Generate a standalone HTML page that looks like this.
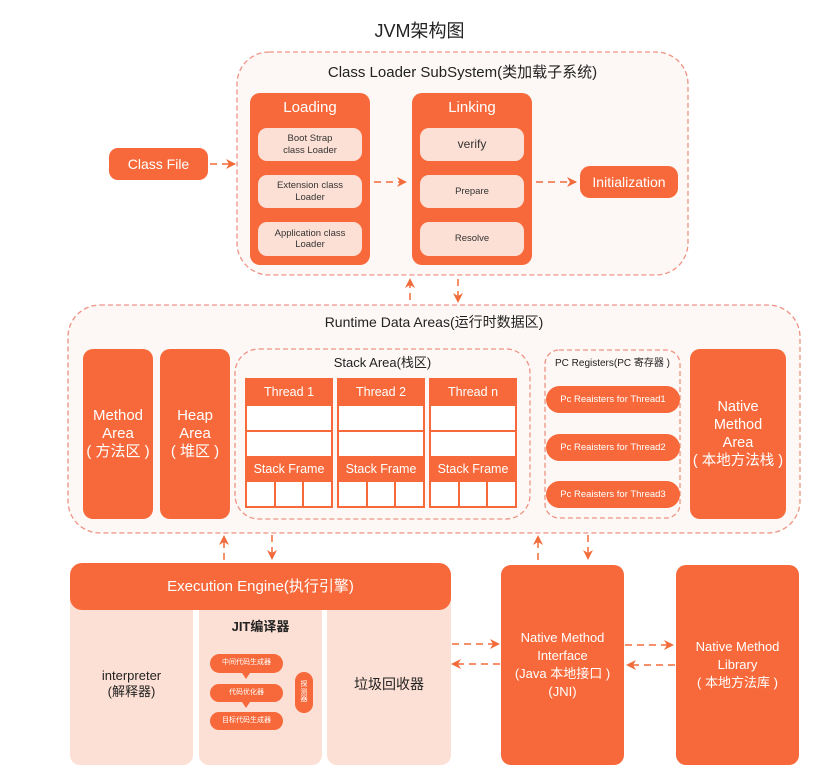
<!DOCTYPE html>
<html><head><meta charset="utf-8"><style>
*{margin:0;padding:0;box-sizing:border-box}
body{width:839px;height:778px;background:#fff;position:relative;overflow:hidden;font-family:"Liberation Sans","Noto Sans CJK SC",sans-serif;}
.a{position:absolute;display:flex;align-items:center;justify-content:center;text-align:center;line-height:1.2}
.o{background:#f7693a;color:#fff}
.p{background:#fde0d5;color:#333}
.t{color:#222}
svg{position:absolute;left:0;top:0}
</style></head><body>
<svg width="839" height="778">
<defs><marker id="ar" viewBox="0 0 10 10" refX="9" refY="5" markerWidth="10" markerHeight="10" markerUnits="userSpaceOnUse" orient="auto"><path d="M0,0 L10,5 L0,10 L3,5z" fill="#f26b3a"/></marker></defs>
<rect x="237" y="52" width="451" height="223" rx="32" fill="#fdf8f6" stroke="#ee9383" stroke-width="1.3" stroke-dasharray="5,3"/>
<rect x="68" y="305" width="732" height="228" rx="32" fill="#fdf8f6" stroke="#ee9383" stroke-width="1.3" stroke-dasharray="5,3"/>
<rect x="235" y="349" width="295" height="170" rx="24" fill="none" stroke="#ee9383" stroke-width="1.3" stroke-dasharray="5,3"/>
<rect x="545" y="350" width="135" height="168" rx="14" fill="none" stroke="#ee9383" stroke-width="1.3" stroke-dasharray="5,3"/>
<g stroke="#f26b3a" stroke-width="1.5" stroke-dasharray="7,5" fill="none" marker-end="url(#ar)">
<path d="M210 164 L235 164"/>
<path d="M374 182 L406 182"/>
<path d="M536 182 L576 182"/>
<path d="M410 300 L410 279"/>
<path d="M458 279 L458 302"/>
<path d="M224 560 L224 536"/>
<path d="M272 535 L272 559"/>
<path d="M538 560 L538 536"/>
<path d="M588 535 L588 559"/>
<path d="M452 644 L499 644"/>
<path d="M500 664 L452 664"/>
<path d="M625 645 L673 645"/>
<path d="M675 665 L627 665"/>
</g>
<rect x="207" y="648" width="85" height="90" rx="14" fill="none" stroke="#e98a7e" stroke-width="1.3" stroke-dasharray="4,3"/>
</svg>
<div class="a t" style="left:0;width:839px;top:20px;height:24px;font-size:18px">JVM架构图</div>
<div class="a t" style="left:237px;width:451px;top:63px;height:20px;font-size:15px">Class Loader SubSystem(类加载子系统)</div>
<div class="a o" style="left:109px;top:148px;width:99px;height:32px;border-radius:9px;font-size:14px">Class File</div>

<div class="o" style="position:absolute;left:250px;top:93px;width:120px;height:172px;border-radius:10px"></div>
<div class="a" style="left:250px;top:98px;width:120px;height:20px;color:#fff;font-size:15px">Loading</div>
<div class="a p" style="left:258px;top:128px;width:104px;height:33px;border-radius:9px;font-size:9.5px">Boot Strap<br>class Loader</div>
<div class="a p" style="left:258px;top:175px;width:104px;height:33px;border-radius:9px;font-size:9.5px">Extension class<br>Loader</div>
<div class="a p" style="left:258px;top:222px;width:104px;height:34px;border-radius:9px;font-size:9.5px">Application class<br>Loader</div>

<div class="o" style="position:absolute;left:412px;top:93px;width:120px;height:172px;border-radius:10px"></div>
<div class="a" style="left:412px;top:98px;width:120px;height:20px;color:#fff;font-size:15px">Linking</div>
<div class="a p" style="left:420px;top:128px;width:104px;height:33px;border-radius:9px;font-size:12px">verify</div>
<div class="a p" style="left:420px;top:175px;width:104px;height:33px;border-radius:9px;font-size:9.5px">Prepare</div>
<div class="a p" style="left:420px;top:222px;width:104px;height:34px;border-radius:9px;font-size:9.5px">Resolve</div>
<div class="a o" style="left:580px;top:166px;width:98px;height:32px;border-radius:10px;font-size:14px">Initialization</div>

<div class="a t" style="left:68px;width:732px;top:312px;height:20px;font-size:14px">Runtime Data Areas(运行时数据区)</div>
<div class="a o" style="left:83px;top:349px;width:70px;height:170px;border-radius:10px;font-size:15px;line-height:1.2">Method<br>Area<br>( 方法区 )</div>
<div class="a o" style="left:160px;top:349px;width:70px;height:170px;border-radius:10px;font-size:15px;line-height:1.2">Heap<br>Area<br>( 堆区 )</div>
<div class="a t" style="left:235px;width:295px;top:354px;height:18px;font-size:13px">Stack Area(栈区)</div>

<div style="position:absolute;left:245px;top:378px;width:88px;height:130px;background:#f7693a;padding:0 2px 2px">
<div class="a" style="position:static;height:28px;color:#fff;font-size:12.5px">Thread 1</div>
<div style="height:24px;background:#fff"></div><div style="height:2px"></div>
<div style="height:24px;background:#fff"></div>
<div class="a" style="position:static;height:26px;color:#fff;font-size:12.5px">Stack Frame</div>
<div style="display:flex;gap:2px;height:24px"><div style="flex:1;background:#fff"></div><div style="flex:1;background:#fff"></div><div style="flex:1;background:#fff"></div></div>
</div>
<div style="position:absolute;left:337px;top:378px;width:88px;height:130px;background:#f7693a;padding:0 2px 2px">
<div class="a" style="position:static;height:28px;color:#fff;font-size:12.5px">Thread 2</div>
<div style="height:24px;background:#fff"></div><div style="height:2px"></div>
<div style="height:24px;background:#fff"></div>
<div class="a" style="position:static;height:26px;color:#fff;font-size:12.5px">Stack Frame</div>
<div style="display:flex;gap:2px;height:24px"><div style="flex:1;background:#fff"></div><div style="flex:1;background:#fff"></div><div style="flex:1;background:#fff"></div></div>
</div>
<div style="position:absolute;left:429px;top:378px;width:88px;height:130px;background:#f7693a;padding:0 2px 2px">
<div class="a" style="position:static;height:28px;color:#fff;font-size:12.5px">Thread n</div>
<div style="height:24px;background:#fff"></div><div style="height:2px"></div>
<div style="height:24px;background:#fff"></div>
<div class="a" style="position:static;height:26px;color:#fff;font-size:12.5px">Stack Frame</div>
<div style="display:flex;gap:2px;height:24px"><div style="flex:1;background:#fff"></div><div style="flex:1;background:#fff"></div><div style="flex:1;background:#fff"></div></div>
</div>

<div class="a t" style="left:545px;width:135px;top:357px;height:14px;font-size:10px">PC Registers(PC 寄存器 )</div>
<div class="a o" style="left:546px;top:386px;width:134px;height:27px;border-radius:14px;font-size:9.5px">Pc Reaisters for Thread1</div>
<div class="a o" style="left:546px;top:434px;width:134px;height:27px;border-radius:14px;font-size:9.5px">Pc Reaisters for Thread2</div>
<div class="a o" style="left:546px;top:481px;width:134px;height:27px;border-radius:14px;font-size:9.5px">Pc Reaisters for Thread3</div>
<div class="a o" style="left:690px;top:349px;width:96px;height:170px;border-radius:10px;font-size:14.5px;line-height:1.25">Native<br>Method<br>Area<br>( 本地方法栈 )</div>

<div class="p" style="position:absolute;left:70px;top:590px;width:123px;height:175px;border-radius:10px"></div>
<div class="p" style="position:absolute;left:199px;top:590px;width:123px;height:175px;border-radius:10px"></div>
<div class="p" style="position:absolute;left:327px;top:590px;width:124px;height:175px;border-radius:10px"></div>
<div class="a o" style="left:70px;top:563px;width:381px;height:47px;border-radius:12px;font-size:15px">Execution Engine(执行引擎)</div>
<div class="a t" style="left:70px;top:666px;width:123px;height:36px;font-size:13px">interpreter<br>(解释器)</div>
<div class="a t" style="left:199px;top:618px;width:123px;height:18px;font-size:13px;font-weight:bold">JIT编译器</div>
<div class="a o" style="left:210px;top:654px;width:73px;height:19px;border-radius:10px;font-size:7px">中间代码生成器</div>
<div class="a o" style="left:210px;top:684px;width:73px;height:18px;border-radius:10px;font-size:7px">代码优化器</div>
<div class="a o" style="left:210px;top:712px;width:73px;height:18px;border-radius:10px;font-size:7px">目标代码生成器</div>
<div style="position:absolute;left:242px;top:673px;border:4px solid transparent;border-top:6px solid #f7693a"></div>
<div style="position:absolute;left:242px;top:702px;border:4px solid transparent;border-top:6px solid #f7693a"></div>
<div class="a o" style="left:295px;top:672px;width:18px;height:41px;border-radius:9px;font-size:7px;line-height:1.1">探<br>测<br>器</div>
<div class="a t" style="left:327px;top:674px;width:124px;height:20px;font-size:14px">垃圾回收器</div>

<div class="a o" style="left:501px;top:565px;width:123px;height:200px;border-radius:10px;font-size:13px;line-height:1.4">Native Method<br>Interface<br>(Java 本地接口 )<br>(JNI)</div>
<div class="a o" style="left:676px;top:565px;width:123px;height:200px;border-radius:10px;font-size:13px;line-height:1.4">Native Method<br>Library<br>( 本地方法库 )</div>
</body></html>
